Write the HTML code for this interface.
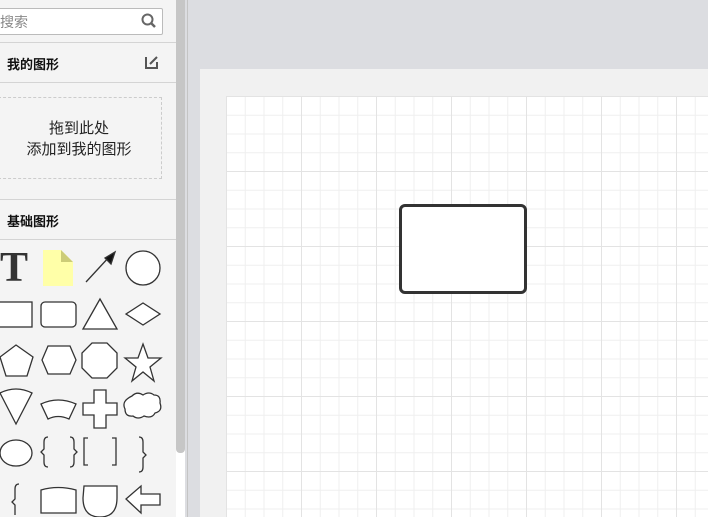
<!DOCTYPE html><html><head><meta charset="utf-8"><style>
body{margin:0;width:708px;height:517px;overflow:hidden;position:relative;font-family:"Liberation Sans","Noto Sans CJK SC",sans-serif;background:#dcdde1}
.sb{position:absolute;left:0;top:0;width:176px;height:517px;background:#f4f4f4}
.scr{position:absolute;left:176px;top:0;width:9px;height:517px;background:#fff}
.thumb{position:absolute;left:176px;top:0;width:9px;height:453px;background:#c6c6c6;border-radius:0 0 4px 4px}
.line{position:absolute;left:0;width:176px;height:1px;background:#d4d4d4}
.h{position:absolute;left:7px;font-size:13px;font-weight:bold;color:#111}
.canvas{position:absolute;left:187px;top:0;right:0;bottom:0;background:#dcdde1;border-left:1px solid #c4c4c4}
.page{position:absolute;left:200px;top:69px;width:508px;height:448px;background:#f1f1f1}
.grid{position:absolute;left:226px;top:96px;width:482px;height:421px;background-color:#fff;
background-image:linear-gradient(#e3e3e3 1px,transparent 1px),linear-gradient(90deg,#e3e3e3 1px,transparent 1px),linear-gradient(#efefef 1px,transparent 1px),linear-gradient(90deg,#efefef 1px,transparent 1px);
background-size:75px 75px,75px 75px,18.75px 18.75px,18.75px 18.75px}
</style></head><body>
<div class="canvas"></div><div class="page"></div><div class="grid"></div>
<div style="position:absolute;left:399px;top:204px;width:122px;height:84px;border:3px solid #333;border-radius:6px;background:#fff"></div>
<div class="sb">
<div style="position:absolute;left:-4px;top:8px;width:165px;height:25px;border:1px solid #bbb;border-radius:2px;background:#fff"></div>
<div style="position:absolute;left:0;top:12px;font-size:14px;color:#888">搜索</div>
<svg style="position:absolute;left:141px;top:13px" width="16" height="16"><circle cx="6.5" cy="6.5" r="5" fill="none" stroke="#666" stroke-width="2"/><path d="M10 10l4 4" stroke="#666" stroke-width="2.5"/></svg>
<div class="line" style="top:42px"></div>
<div class="h" style="top:54px">我的图形</div>
<svg style="position:absolute;left:145px;top:55px" width="14" height="14"><path d="M1 2v11h11V7" fill="none" stroke="#555" stroke-width="2"/><path d="M5 9l7-7" stroke="#555" stroke-width="2"/></svg>
<div class="line" style="top:82px"></div>
<div style="position:absolute;left:-2px;top:97px;width:162px;height:80px;border:1px dashed #ccc"></div>
<div style="position:absolute;left:0;top:118px;width:158px;text-align:center;font-size:15px;line-height:21px;color:#222">拖到此处<br>添加到我的图形</div>
<div class="line" style="top:199px"></div>
<div class="h" style="top:211px">基础图形</div>
<div class="line" style="top:239px"></div>
<svg style="position:absolute;left:0;top:240px" width="176" height="277" fill="#fff" stroke="#333" stroke-width="1.3">
<text x="0" y="41" font-family="Liberation Serif" font-weight="bold" font-size="42" fill="#333" stroke="none">T</text>
<path d="M43 10h18l12 12v24H43z" fill="#ffffa8" stroke="none"/><path d="M61 10l12 12H61z" fill="#cccc77" stroke="none"/>
<path d="M86 42l24-26" /><path d="M115 12l-4 12-6-6z" fill="#111"/>
<circle cx="143" cy="28" r="17"/>
<rect x="-2" y="62" width="34" height="25"/><rect x="41" y="62" width="35" height="25" rx="4"/>
<path d="M83 89l17-30 17 30z"/><path d="M126 74l17-11 17 11-17 11z"/>
<path d="M16 105l17 12-6 19H6l-6-19z"/><path d="M48 106h22l6 14-6 14H48l-6-14z"/><path d="M92 103h15l10 10v15l-10 10H92l-10-10v-15z"/>
<path d="M143 104l5 14h13l-11 9 4 14-11-9-11 9 4-14-11-9h13z"/>
<path d="M0 153q16-8 32 0l-16 31z"/><path d="M41 164q17-8 35 0l-7 15q-11-5-21 0z"/>
<path d="M94 150h12v13h11v12h-11v13H94v-13H83v-12h11z"/>
<path d="M132 156q5-5 11-1 6-4 11 0 7 0 6 8 3 8-5 10-3 6-11 3-6 4-11 0-8 1-8-7-4-8 7-13z"/>
<ellipse cx="16" cy="213" rx="16" ry="13"/>
<g fill="none"><path d="M48 197q-4 0-4 5v7l-3 3 3 3v7q0 5 4 5"/><path d="M70 197q4 0 4 5v7l3 3-3 3v7q0 5-4 5"/>
<path d="M88 198h-4v27h4"/><path d="M112 198h4v27h-4"/><path d="M139 197q4 0 4 5v10l3 3-3 3v9q0 5-4 5"/>
<path d="M19 244q-4 0-4 5v10l-3 3 3 3v10"/></g>
<path d="M41 250q17-5 35 0v23H41z"/><path d="M84 246h33v12q0 19-17 19t-17-19z"/>
<path d="M126 259l15-13v8h19v11h-19v8z"/>
</svg>
</div>
<div class="scr"></div><div class="thumb"></div>
</body></html>
